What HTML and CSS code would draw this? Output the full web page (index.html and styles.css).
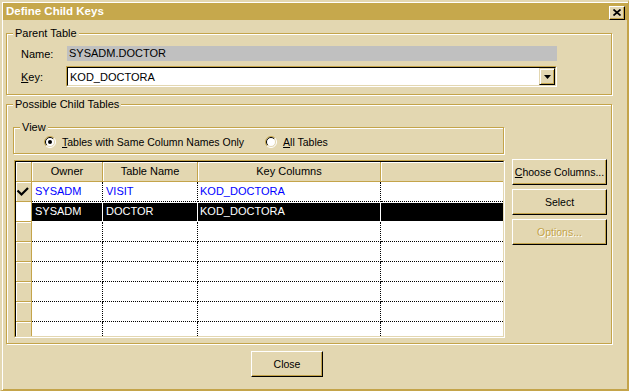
FILE: index.html
```html
<!DOCTYPE html>
<html lang="en">
<head>
  <meta charset="UTF-8" />
  <title>Define Child Keys</title>
  <link rel="stylesheet" href="styles.css">
</head>
<body>
  <div class="window">
    <div class="titlebar">
      <span class="title">Define Child Keys</span>
      <button class="caption-btn" type="button">
        <svg width="8" height="7" viewBox="0 0 8 7"><path d="M0.5 0.5 L7.5 6.5 M7.5 0.5 L0.5 6.5" stroke="#000" stroke-width="1.7" fill="none"/></svg>
      </button>
    </div>

    <div class="dialog-body">
      <fieldset class="group parent-group">
        <legend>Parent Table</legend>
        <div class="field-row name-row">
          <span class="field-label">Name:</span>
          <div class="readonly">SYSADM.DOCTOR</div>
        </div>
        <div class="field-row key-row">
          <span class="field-label"><u>K</u>ey:</span>
          <div class="combo">
            <div class="combo-inner">
              <span class="combo-text">KOD_DOCTORA</span>
              <span class="combo-btn">
                <svg width="7" height="4" viewBox="0 0 7 4"><polygon points="0,0 7,0 3.5,4" fill="#000"/></svg>
              </span>
            </div>
          </div>
        </div>
      </fieldset>

      <fieldset class="group child-group">
        <legend>Possible Child Tables</legend>
        <fieldset class="group view-group">
          <legend>View</legend>
          <div class="radio-row">
            <label class="radio">
              <svg width="12" height="12" viewBox="0 0 12 12">
                <circle cx="6" cy="6" r="5" fill="#fff"/>
                <path d="M9.9 2.1 A5.5 5.5 0 0 0 2.1 9.9" stroke="#c4a44a" fill="none"/>
                <path d="M9.9 2.1 A5.5 5.5 0 0 1 2.1 9.9" stroke="#fff" fill="none"/>
                <path d="M9.2 2.8 A4.5 4.5 0 0 0 2.8 9.2" stroke="#000" fill="none"/>
                <path d="M9.2 2.8 A4.5 4.5 0 0 1 2.8 9.2" stroke="#e3d7b1" fill="none"/>
                <circle cx="6" cy="6" r="2" fill="#000"/>
              </svg>
              <span><u>T</u>ables with Same Column Names Only</span>
            </label>
            <label class="radio">
              <svg width="12" height="12" viewBox="0 0 12 12">
                <circle cx="6" cy="6" r="5" fill="#fff"/>
                <path d="M9.9 2.1 A5.5 5.5 0 0 0 2.1 9.9" stroke="#c4a44a" fill="none"/>
                <path d="M9.9 2.1 A5.5 5.5 0 0 1 2.1 9.9" stroke="#fff" fill="none"/>
                <path d="M9.2 2.8 A4.5 4.5 0 0 0 2.8 9.2" stroke="#000" fill="none"/>
                <path d="M9.2 2.8 A4.5 4.5 0 0 1 2.8 9.2" stroke="#e3d7b1" fill="none"/>
              </svg>
              <span><u>A</u>ll Tables</span>
            </label>
          </div>
        </fieldset>

        <div class="child-main">
          <div class="grid">
            <div class="grid-inner">
              <div class="grid-row grid-head">
                <div class="ind"></div>
                <div class="cell c-owner">Owner</div>
                <div class="cell c-table">Table Name</div>
                <div class="cell c-key">Key Columns</div>
                <div class="cell c-fill"></div>
              </div>
              <div class="grid-row linked">
                <div class="ind">
                  <svg width="14" height="20" viewBox="0 0 14 20"><polyline points="1.5,8.5 5.5,12.5 12,6" stroke="#000" stroke-width="2.2" fill="none"/></svg>
                </div>
                <div class="cell c-owner">SYSADM</div>
                <div class="cell c-table">VISIT</div>
                <div class="cell c-key">KOD_DOCTORA</div>
                <div class="cell c-fill"></div>
              </div>
              <div class="grid-row selected">
                <div class="ind current"></div>
                <div class="cell c-owner">SYSADM</div>
                <div class="cell c-table">DOCTOR</div>
                <div class="cell c-key">KOD_DOCTORA</div>
                <div class="cell c-fill"></div>
              </div>
              <div class="grid-row"><div class="ind"></div><div class="cell c-owner"></div><div class="cell c-table"></div><div class="cell c-key"></div><div class="cell c-fill"></div></div>
              <div class="grid-row"><div class="ind"></div><div class="cell c-owner"></div><div class="cell c-table"></div><div class="cell c-key"></div><div class="cell c-fill"></div></div>
              <div class="grid-row"><div class="ind"></div><div class="cell c-owner"></div><div class="cell c-table"></div><div class="cell c-key"></div><div class="cell c-fill"></div></div>
              <div class="grid-row"><div class="ind"></div><div class="cell c-owner"></div><div class="cell c-table"></div><div class="cell c-key"></div><div class="cell c-fill"></div></div>
              <div class="grid-row"><div class="ind"></div><div class="cell c-owner"></div><div class="cell c-table"></div><div class="cell c-key"></div><div class="cell c-fill"></div></div>
              <div class="grid-row"><div class="ind"></div><div class="cell c-owner"></div><div class="cell c-table"></div><div class="cell c-key"></div><div class="cell c-fill"></div></div>
            </div>
          </div>

          <div class="side-buttons">
            <button class="btn" type="button"><u>C</u>hoose Columns...</button>
            <button class="btn" type="button">Select</button>
            <button class="btn disabled" type="button" disabled>Options...</button>
          </div>
        </div>
      </fieldset>

      <div class="footer">
        <button class="btn close-btn" type="button">Close</button>
      </div>
    </div>
  </div>
</body>
</html>
```

FILE: styles.css
```css
body {
  margin: 0;
  background: #e3d7b1;
  font-family: "Liberation Sans", Arial, sans-serif;
  font-size: 11px;
  color: #000;
}

.window {
  width: 629px;
  height: 391px;
  box-sizing: border-box;
  border-style: solid;
  border-width: 2px 1px 1px 2px;
  border-color: #e3d7b1 #c4a44a #c4a44a #e3d7b1;
  padding: 1px;
  box-shadow: inset 1px 1px 0 #fff, inset -1px -1px 0 #c4a44a;
  background: #e3d7b1;
}

.titlebar {
  height: 17px;
  background: #c6a84c;
  display: flex;
  align-items: center;
  justify-content: space-between;
  padding: 0 2px 0 3px;
}

.title {
  color: #fff;
  font-weight: bold;
  font-size: 11.5px;
  line-height: 17px;
}

.caption-btn {
  width: 16px;
  height: 14px;
  padding: 0;
  margin-top: 2px;
  box-sizing: border-box;
  background: #e3d7b1;
  border: 1px solid;
  border-color: #fff #000 #000 #fff;
  box-shadow: inset -1px -1px 0 #c4a44a;
  display: flex;
  align-items: center;
  justify-content: center;
}

.dialog-body {
  padding: 7px 15px 0 3px;
}

/* etched group boxes */
.group {
  margin: 0;
  border: 1px solid #c4a44a;
  box-shadow: 1px 1px 0 #fff, inset 1px 1px 0 #fff;
  min-width: 0;
}

.group legend {
  padding: 0 2px;
  line-height: 13px;
  background: #e3d7b1;
}

.parent-group {
  width: 606px;
  box-sizing: border-box;
  padding: 6px 40px 7px 14px;
}

.parent-group legend {
  margin-left: -8px;
}

.field-row {
  display: flex;
  align-items: center;
}

.name-row {
  height: 15px;
  margin-bottom: 5px;
}

.field-label {
  width: 45px;
  flex: none;
}

.readonly {
  width: 490px;
  height: 15px;
  margin-left: 1px;
  background: #c0c0c0;
  line-height: 15px;
  padding-left: 2px;
  box-sizing: border-box;
}

.combo {
  width: 491px;
  height: 21px;
  box-sizing: border-box;
  border: 1px solid;
  border-color: #c4a44a #fff #fff #c4a44a;
}

.combo-inner {
  height: 100%;
  box-sizing: border-box;
  border: 1px solid;
  border-color: #000 #e3d7b1 #e3d7b1 #000;
  background: #fff;
  display: flex;
  align-items: center;
  justify-content: space-between;
}

.combo-text {
  padding-left: 2px;
}

.combo-btn {
  width: 16px;
  height: 17px;
  box-sizing: border-box;
  background: #e3d7b1;
  border: 1px solid;
  border-color: #e3d7b1 #000 #000 #e3d7b1;
  box-shadow: inset 1px 1px 0 #fff, inset -1px -1px 0 #c4a44a;
  display: flex;
  align-items: center;
  justify-content: center;
}

.child-group {
  width: 606px;
  box-sizing: border-box;
  margin-top: 3px;
  padding: 10px 4px 5px 6px;
}

.view-group {
  width: 491px;
  box-sizing: border-box;
  padding: 1px 0 5px 30px;
}

.view-group legend {
  margin-left: -24px;
}

.radio-row {
  display: flex;
  align-items: center;
  height: 13px;
  font-size: 10.5px;
}

.radio {
  display: flex;
  align-items: center;
  gap: 6px;
  margin-right: 21px;
}

.radio svg {
  display: block;
}

.child-main {
  display: flex;
  align-items: flex-start;
  margin-top: 6px;
}

/* grid */
.grid {
  width: 491px;
  height: 178px;
  margin-left: 1px;
  box-sizing: border-box;
  border: 1px solid;
  border-color: #c4a44a #fff #fff #c4a44a;
}

.grid-inner {
  height: 100%;
  box-sizing: border-box;
  border: 1px solid;
  border-color: #000 #e3d7b1 #e3d7b1 #000;
  background: #fff;
  overflow: hidden;
}

.grid-row {
  display: flex;
  height: 20px;
}

.ind {
  width: 16px;
  flex: none;
  box-sizing: border-box;
  background: #e3d7b1;
  border-right: 1px solid #c4a44a;
  border-bottom: 1px solid #c4a44a;
  box-shadow: inset 1px 1px 0 #fff;
}

.ind.current {
  background: #fff;
}

.ind svg {
  display: block;
}

.cell {
  flex: none;
  box-sizing: border-box;
  border-right: 1px dotted #000;
  border-bottom: 1px dotted #000;
  padding-left: 3px;
  line-height: 19px;
  white-space: nowrap;
  overflow: hidden;
}

.c-owner { width: 71px; }
.c-table { width: 95px; }
.c-key { width: 183px; padding-left: 2px; }
.c-fill { width: 122px; border-right: none; }

.grid-head .cell {
  background: #e3d7b1;
  border-right: 1px solid #c4a44a;
  border-bottom: 1px solid #c4a44a;
  box-shadow: inset 1px 1px 0 #fff;
  text-align: center;
  padding-left: 0;
}

.grid-head .c-fill {
  border-right: none;
}

.linked .cell {
  color: #0000ff;
}

.selected .cell {
  background: #000;
  background-clip: padding-box;
  color: #fff;
  border-right-color: #fff;
  line-height: 17px;
  border-top: 1px dotted #fff;
  border-bottom: 1px dotted #fff;
  height: 20px;
}

/* buttons */
.side-buttons {
  display: flex;
  flex-direction: column;
  gap: 4px;
  margin-left: 7px;
  margin-top: -1px;
}

.btn {
  width: 95px;
  height: 26px;
  padding: 0;
  box-sizing: border-box;
  font-family: inherit;
  font-size: 10.5px;
  white-space: nowrap;
  color: #000;
  background: #e3d7b1;
  border: 1px solid;
  border-color: #fff #000 #000 #fff;
  box-shadow: inset -1px -1px 0 #c4a44a;
  cursor: pointer;
}

.btn.disabled {
  color: #c4a44a;
  text-shadow: 1px 1px 0 #fff;
  cursor: default;
}

.footer {
  padding: 7px 0 0 245px;
}

.close-btn {
  width: 72px;
}
```
